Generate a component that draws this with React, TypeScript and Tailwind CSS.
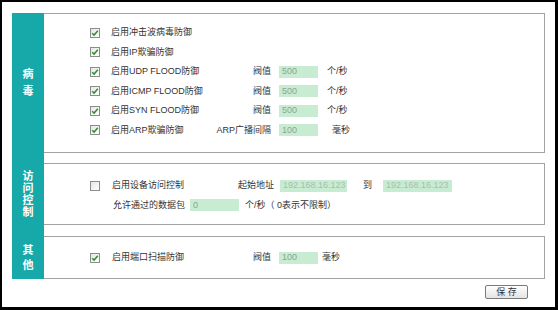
import React from 'react';

const font = { fontFamily: '"Liberation Sans", "Noto Sans CJK SC", sans-serif' };

function Check({ checked }: { checked: boolean }) {
  return (
    <span className="w-[10px] h-[10px] border border-[#8c8c8c] bg-gradient-to-br from-[#e6e6e6] to-white flex items-center justify-center shrink-0">
      {checked && (
        <svg width="8" height="8" viewBox="0 0 8 8">
          <path d="M1.2 4.2 L3.1 6.1 L6.8 1.8" fill="none" stroke="#2f8f2f" strokeWidth="1.5" />
        </svg>
      )}
    </span>
  );
}

function Field({ value, w, light }: { value: string; w: string; light?: boolean }) {
  return (
    <span className={`${w} h-[12px] bg-[#c7ecd1] flex items-center pl-[3px] ${light ? 'text-[#a9bcb1]' : 'text-[#8aa596]'}`}>
      {value}
    </span>
  );
}

type Row = { label: string; checked: boolean; tag?: string; value?: string; unit?: string; unitGap?: string };

const virusRows: Row[] = [
  { label: '启用冲击波病毒防御', checked: true },
  { label: '启用IP欺骗防御', checked: true },
  { label: '启用UDP FLOOD防御', checked: true, tag: '阀值', value: '500', unit: '个/秒' },
  { label: '启用ICMP FLOOD防御', checked: true, tag: '阀值', value: '500', unit: '个/秒' },
  { label: '启用SYN FLOOD防御', checked: true, tag: '阀值', value: '500', unit: '个/秒' },
  { label: '启用ARP欺骗防御', checked: true, tag: 'ARP广播间隔', value: '100', unit: '毫秒', unitGap: 'ml-[14px]' },
];

function OptionRow({ row }: { row: Row }) {
  return (
    <div className="h-[19.5px] flex items-center pl-[46px]">
      <Check checked={row.checked} />
      <span className="ml-[11px] w-[100px]">{row.label}</span>
      {row.tag && (
        <>
          <span className="w-[60px] text-right">{row.tag}</span>
          <span className="ml-[8px]"><Field value={row.value!} w="w-[39px]" /></span>
          <span className={row.unitGap ?? 'ml-[9px]'}>{row.unit}</span>
        </>
      )}
    </div>
  );
}

function Side({ children, h }: { children?: React.ReactNode; h: string }) {
  return (
    <div className={`w-[32px] ${h} bg-[#17a9a9] text-white font-bold text-[11px] flex flex-col items-center justify-center shrink-0`}>
      {children}
    </div>
  );
}

export default function App() {
  return (
    <div
      style={font}
      className="w-[558px] h-[310px] bg-white border-black border-l-2 border-t-2 border-r-[3px] border-b-[3px] pl-[10px] pt-[11px] text-[9px] text-[#333] leading-none"
    >
      <div className="flex flex-col w-[533px]">
        {/* 病毒 */}
        <div className="flex">
          <Side h="h-[140px]">
            <span className="leading-[17px]">病</span>
            <span className="leading-[17px]">毒</span>
          </Side>
          <div className="flex-1 border border-l-0 border-[#a3a3a3] pt-[9px]">
            {virusRows.map((r, i) => (
              <OptionRow key={i} row={r} />
            ))}
          </div>
        </div>
        <div className="flex">
          <Side h="h-[10px]" />
        </div>

        {/* 访问控制 */}
        <div className="flex">
          <Side h="h-[62px]">
            {['访', '问', '控', '制'].map((c) => (
              <span key={c} className="leading-[12px]">{c}</span>
            ))}
          </Side>
          <div className="flex-1 border border-l-0 border-[#a3a3a3] pt-[12px]">
            <div className="h-[19.5px] flex items-center pl-[46px]">
              <Check checked={false} />
              <span className="ml-[12px] w-[100px]">启用设备访问控制</span>
              <span className="w-[62px] text-right">起始地址</span>
              <span className="ml-[6px]"><Field value="192.168.16.123" w="w-[67px]" light /></span>
              <span className="ml-[16px]">到</span>
              <span className="ml-[11px]"><Field value="192.168.16.123" w="w-[69px]" light /></span>
            </div>
            <div className="h-[19.5px] flex items-center pl-[69px]">
              <span>允许通过的数据包</span>
              <span className="ml-[5px]"><Field value="0" w="w-[49px]" /></span>
              <span className="ml-[6px]">个/秒（ 0表示不限制）</span>
            </div>
          </div>
        </div>
        <div className="flex">
          <Side h="h-[11px]" />
        </div>

        {/* 其他 */}
        <div className="flex">
          <Side h="h-[43px]">
            <span className="leading-[15px]">其</span>
            <span className="leading-[15px]">他</span>
          </Side>
          <div className="flex-1 border border-l-0 border-[#a3a3a3] flex items-center">
            <div className="h-[19.5px] flex items-center pl-[46px]">
              <Check checked={true} />
              <span className="ml-[12px] w-[99px]">启用端口扫描防御</span>
              <span className="w-[60px] text-right">阀值</span>
              <span className="ml-[8px]"><Field value="100" w="w-[39px]" /></span>
              <span className="ml-[4px]">毫秒</span>
            </div>
          </div>
        </div>
      </div>

      <div className="flex justify-end w-[533px] pr-[17px] mt-[6px]">
        <button className="w-[43px] h-[14px] border border-[#7a7a7a] rounded-[2px] bg-gradient-to-b from-white to-[#e4e4e4] text-[9px] text-[#333] flex items-center justify-center">
          保&nbsp;存
        </button>
      </div>
    </div>
  );
}
